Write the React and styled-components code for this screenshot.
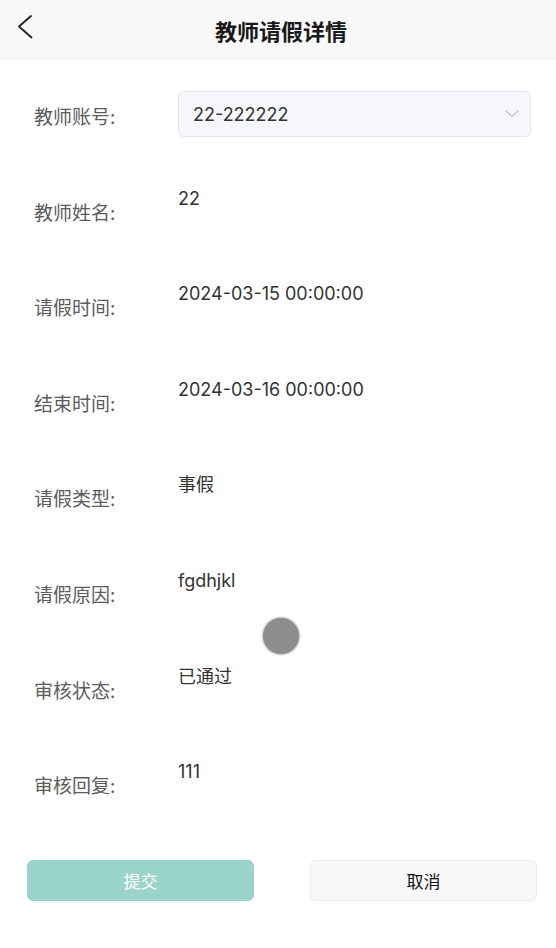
import React from "react";
import styled, { createGlobalStyle } from "styled-components";

const Global = createGlobalStyle`
  html, body { margin: 0; padding: 0; background: #fff; }
  body { font-family: "Inter", "Noto Sans CJK SC", sans-serif; }
  * { box-sizing: border-box; }
`;

const Page = styled.div`
  position: relative;
  width: 556px;
  height: 948px;
  background: #fff;
  overflow: hidden;
`;

const Header = styled.header`
  height: 60px;
  background: #f8f8f8;
  display: flex;
  align-items: center;
  justify-content: center;
  position: relative;
`;

const Back = styled.button`
  position: absolute;
  left: 12px;
  top: 10px;
  width: 28px;
  height: 34px;
  border: none;
  background: transparent;
  padding: 0;
  display: flex;
  align-items: center;
  justify-content: center;
`;

const Title = styled.h1`
  margin: 0 0 0 6px;
  font-size: 22px;
  font-weight: 700;
  color: #1a1a1a;
  font-family: "Noto Sans CJK SC", sans-serif;
`;

const Form = styled.div`
  padding: 31px 25px 0 34px;
  display: flex;
  flex-direction: column;
`;

const Row = styled.div`
  height: 95.6px;
  display: flex;
  align-items: flex-start;
`;

const Label = styled.div`
  width: 144px;
  flex-shrink: 0;
  padding-top: 13px;
  font-size: 19px;
  line-height: 24px;
  color: #5c5c5c;
  font-family: "Noto Sans CJK SC", sans-serif;
`;

const Value = styled.div`
  font-size: 18px;
  line-height: 24px;
  color: #333;
`;

const Select = styled.div`
  flex: 1;
  height: 46px;
  background: #f5f7fa;
  border: 1px solid #e4e7ed;
  border-radius: 5px;
  display: flex;
  align-items: center;
  justify-content: space-between;
  padding: 0 10px 0 14px;
  font-size: 18px;
  color: #333;
`;

const Actions = styled.div`
  display: flex;
  justify-content: space-between;
  padding: 0 19px 0 27px;
  margin-top: 4px;
`;

const Btn = styled.button`
  width: 227px;
  height: 41px;
  border-radius: 6px;
  font-size: 17px;
  font-family: "Noto Sans CJK SC", sans-serif;
  cursor: pointer;
  border: 1px solid ${(p) => (p.$primary ? "#9ad4ca" : "#ececec")};
  background: ${(p) => (p.$primary ? "#9ad4ca" : "#f8f8f8")};
  color: ${(p) => (p.$primary ? "#ffffff" : "#111")};
`;

const Touch = styled.div`
  position: absolute;
  left: 263px;
  top: 618px;
  width: 36px;
  height: 36px;
  border-radius: 50%;
  background: #8d8d8d;
  box-shadow: 0 0 2px 1px rgba(140, 140, 140, 0.6);
  pointer-events: none;
`;

const rows = [
  ["教师姓名:", "22"],
  ["请假时间:", "2024-03-15 00:00:00"],
  ["结束时间:", "2024-03-16 00:00:00"],
  ["请假类型:", "事假"],
  ["请假原因:", "fgdhjkl"],
  ["审核状态:", "已通过"],
  ["审核回复:", "111"],
];

export default function App() {
  return (
    <Page>
      <Global />
      <Header>
        <Back aria-label="返回">
          <svg width="20" height="26" viewBox="0 0 20 26">
            <path d="M15 2 L3 12.5 L15.5 23.5" fill="none" stroke="#222" strokeWidth="1.8" strokeLinecap="round" strokeLinejoin="round" />
          </svg>
        </Back>
        <Title>教师请假详情</Title>
      </Header>
      <Form>
        <Row>
          <Label>教师账号:</Label>
          <Select>
            <span>22-222222</span>
            <svg width="16" height="10" viewBox="0 0 16 10">
              <path d="M2 2 L8 7.5 L14 2" fill="none" stroke="#c0c4cc" strokeWidth="1.4" strokeLinecap="round" strokeLinejoin="round" />
            </svg>
          </Select>
        </Row>
        {rows.map(([l, v]) => (
          <Row key={l}>
            <Label>{l}</Label>
            <Value>{v}</Value>
          </Row>
        ))}
      </Form>
      <Actions>
        <Btn $primary>提交</Btn>
        <Btn>取消</Btn>
      </Actions>
      <Touch />
    </Page>
  );
}
